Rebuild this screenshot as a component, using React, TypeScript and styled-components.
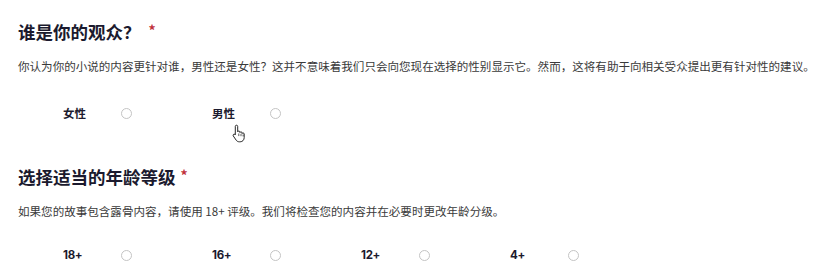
import React from 'react';
import styled, { createGlobalStyle } from 'styled-components';

const GlobalStyle = createGlobalStyle`
  html, body {
    margin: 0;
    padding: 0;
    background: #ffffff;
  }
  body {
    font-family: "Noto Sans", "Noto Sans CJK SC", sans-serif;
    -webkit-font-smoothing: antialiased;
  }
`;

const Page = styled.div`
  position: relative;
  width: 819px;
  height: 279px;
  box-sizing: border-box;
  padding: 20px 0 0 18px;
  overflow: hidden;
`;

const Section = styled.section<{ $first?: boolean }>`
  display: flex;
  flex-direction: column;
  margin-top: ${p => (p.$first ? 0 : 42)}px;
`;

const Title = styled.h2`
  margin: 0;
  height: 24px;
  line-height: 24px;
  font-family: "Noto Sans CJK SC", "Noto Sans", sans-serif;
  font-size: 17.5px;
  font-weight: 700;
  color: #1b1a2e;
  white-space: nowrap;
`;

const Required = styled.span<{ $gap: number }>`
  display: inline-block;
  margin-left: ${p => p.$gap}px;
  color: #c0303a;
  font-size: 14px;
  vertical-align: top;
  line-height: 20px;
`;

const Desc = styled.p`
  margin: 14px 0 0;
  line-height: 16px;
  font-family: "Noto Sans CJK SC", "Noto Sans", sans-serif;
  font-size: 11.55px;
  color: #3a3a3a;
  white-space: nowrap;
`;

const OptionsRow = styled.div<{ $top: number }>`
  display: flex;
  align-items: center;
  height: 20px;
  margin-top: ${p => p.$top}px;
  padding-left: 45px;
`;

const Option = styled.label`
  display: flex;
  align-items: center;
  width: 149px;
  flex: none;
`;

const OptionLabel = styled.span<{ $latin?: boolean }>`
  width: 58px;
  font-family: ${p =>
    p.$latin ? '"Inter", "Noto Sans", sans-serif' : '"Noto Sans CJK SC", sans-serif'};
  font-size: 11.5px;
  font-weight: 700;
  letter-spacing: ${p => (p.$latin ? '-0.3px' : '0')};
  color: #1b1a2e;
`;

const Radio = styled.span`
  width: 9px;
  height: 9px;
  border-radius: 50%;
  border: 1px solid #c4c4c4;
  background: #fff;
  flex: none;
`;

const Cursor = styled.svg`
  position: absolute;
  left: 231px;
  top: 124px;
  width: 16px;
  height: 19px;
`;

const genders = ['女性', '男性'];
const ages = ['18+', '16+', '12+', '4+'];

export default function App() {
  return (
    <>
      <GlobalStyle />
      <Page>
        <Section $first>
          <Title>
            谁是你的观众？<Required $gap={8}>*</Required>
          </Title>
          <Desc>
            你认为你的小说的内容更针对谁，男性还是女性？这并不意味着我们只会向您现在选择的性别显示它。然而，这将有助于向相关受众提出更有针对性的建议。
          </Desc>
          <OptionsRow $top={29}>
            {genders.map(g => (
              <Option key={g}>
                <OptionLabel>{g}</OptionLabel>
                <Radio />
              </Option>
            ))}
          </OptionsRow>
        </Section>

        <Section>
          <Title>
            选择适当的年龄等级<Required $gap={5}>*</Required>
          </Title>
          <Desc>如果您的故事包含露骨内容，请使用 18+ 评级。我们将检查您的内容并在必要时更改年龄分级。</Desc>
          <OptionsRow $top={26}>
            {ages.map(a => (
              <Option key={a}>
                <OptionLabel $latin>{a}</OptionLabel>
                <Radio />
              </Option>
            ))}
          </OptionsRow>
        </Section>

        <Cursor viewBox="0 0 16 19">
          <path
            d="M5.5 1.2c.7 0 1.2.5 1.2 1.2v5.4c.2-.5.6-.8 1.1-.8.6 0 1.1.5 1.1 1.1v.4c.2-.4.6-.7 1.1-.7.6 0 1.1.5 1.1 1.1v.6c.2-.4.6-.6 1-.6.6 0 1.1.5 1.1 1.1v3.6c0 2.3-1.7 4.2-4 4.2H8.3c-1.3 0-2.4-.6-3.1-1.6L2.3 12c-.4-.5-.3-1.2.2-1.6.5-.4 1.1-.3 1.5.1l.3.4V2.4c0-.7.5-1.2 1.2-1.2z"
            fill="#fff"
            stroke="#111"
            strokeWidth="0.9"
            strokeLinejoin="round"
          />
          <path d="M7.8 9.5v2.6M10 9.9v2.3M12.1 10.6v1.8" stroke="#111" strokeWidth="0.7" />
        </Cursor>
      </Page>
    </>
  );
}
